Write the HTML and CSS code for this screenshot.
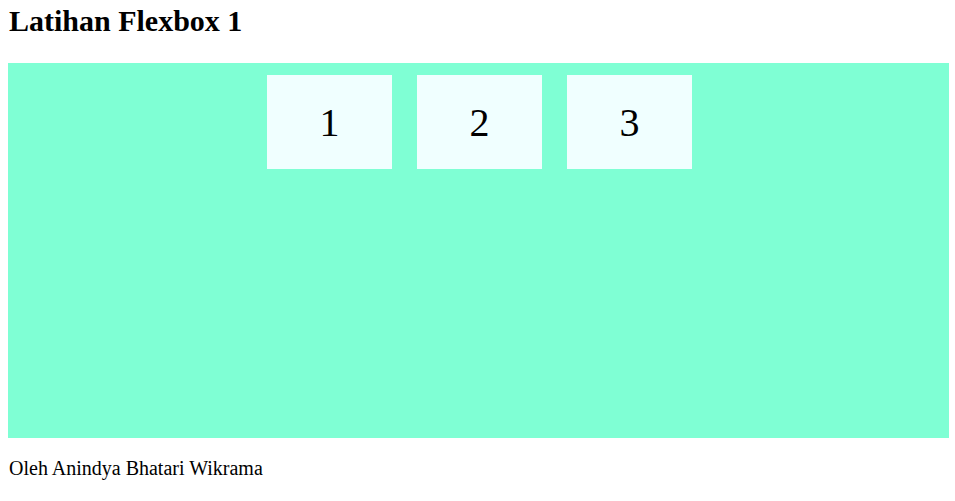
FILE: index.html
```html
<!DOCTYPE html>
<html lang="id">
<head>
    <meta charset="UTF-8">
    <title>Latihan Flexbox 1</title>
    <link rel="stylesheet" href="styles.css">
</head>
<body>
    <h1>Latihan Flexbox 1</h1>

    <div class="container">
        <div class="box">1</div>
        <div class="box">2</div>
        <div class="box">3</div>
    </div>

    <p class="author">Oleh Anindya Bhatari Wikrama</p>
</body>
</html>
```

FILE: styles.css
```css
body {
    font-family: "Liberation Serif", "Times New Roman", serif;
    margin: 0;
    padding: 4px 6px 0 8px;
}

h1 {
    font-size: 30px;
    margin: 0 0 25px 1px;
}

/* kotak flex utama, isi di tengah atas */
.container {
    background-color: aquamarine;
    height: 375px;
    padding: 12px 11px 12px 13px;
    box-sizing: border-box;
    display: flex;
    justify-content: center;
    align-items: flex-start;
    gap: 25px;
}

.box {
    background-color: azure;
    width: 125px;
    height: 94px;
    font-size: 40px;
    display: flex;
    justify-content: center;
    align-items: center;
}

.author {
    font-size: 20px;
    margin: 19px 0 0 1px;
}
```
